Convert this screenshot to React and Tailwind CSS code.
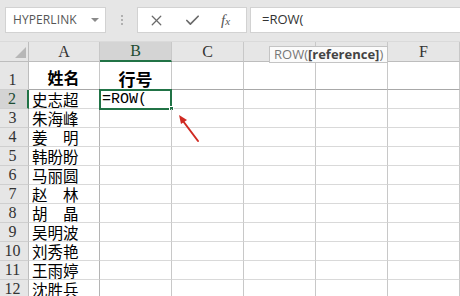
import React from "react";
import { X, Check } from "lucide-react";

const names = ["史志超", "朱海峰", "姜　明", "韩盼盼", "马丽圆", "赵　林", "胡　晶", "吴明波", "刘秀艳", "王雨婷", "沈胜兵"];
const cols = ["A", "B", "C", "D", "E", "F"];

function HeaderCell({ children, selected }) {
  return (
    <div
      className={
        "h-[20px] flex items-center justify-center border-r border-[#c8c8c8] text-[16px] " +
        (selected ? "bg-[#d4d4d4] border-b-2 border-b-[#217346] text-[#1d4d32]" : "bg-[#e6e6e6] border-b border-b-[#bdbdbd] text-[#333]")
      }
      style={{ fontFamily: '"Liberation Serif", serif' }}
    >
      {children}
    </div>
  );
}

function RowHead({ n, h, selected }) {
  return (
    <div
      className={
        "flex items-end justify-center pr-[3px] text-[16px] leading-[18px] border-b border-[#cfcfcf] " +
        h +
        (selected ? " bg-[#d4d4d4] border-r-2 border-r-[#217346] text-[#1d4d32]" : " bg-[#e6e6e6] border-r border-r-[#bdbdbd] text-[#333]")
      }
      style={{ fontFamily: '"Liberation Serif", serif' }}
    >
      {n}
    </div>
  );
}

export default function App() {
  const cjk = { fontFamily: '"Noto Sans CJK SC", sans-serif' };
  return (
    <div className="relative w-[460px] h-[296px] overflow-hidden bg-white" style={{ fontFamily: '"Open Sans", sans-serif' }}>
      {/* formula bar */}
      <div className="h-[42px] bg-[#e6e6e6] flex items-start pt-[7px] border-b border-[#dadada]">
        <div className="ml-[5px] w-[101px] h-[26px] bg-white border border-[#d2d2d2] flex items-center pl-[7px] pr-[6px] justify-between">
          <span className="text-[12px] text-[#555] tracking-[0.1px]">HYPERLINK</span>
          <svg width="8" height="5" viewBox="0 0 8 5"><path d="M0 0 L8 0 L4 4 Z" fill="#8a8a8a" /></svg>
        </div>
        <div className="w-[31px] h-[26px] flex flex-col items-center justify-center gap-[2px]">
          <div className="w-[2px] h-[2px] bg-[#b0b0b0]" />
          <div className="w-[2px] h-[2px] bg-[#b0b0b0]" />
          <div className="w-[2px] h-[2px] bg-[#b0b0b0]" />
        </div>
        <div className="w-[110px] h-[26px] bg-white border border-[#d2d2d2] flex items-center pl-[10px]">
          <X size={17} strokeWidth={1.8} color="#6a6a6a" />
          <div className="w-[19px]" />
          <Check size={17} strokeWidth={2.4} color="#6a6a6a" />
          <div className="w-[20px]" />
          <span className="text-[15px] italic text-[#555]" style={{ fontFamily: '"Liberation Serif", serif' }}>f<span className="text-[11px]">x</span></span>
        </div>
        <div className="ml-[3px] flex-1 h-[26px] bg-white border border-[#d2d2d2] border-r-0 flex items-center pl-[11px]">
          <span className="text-[13px] text-[#333]">=ROW(</span>
        </div>
      </div>

      {/* sheet */}
      <div className="grid grid-cols-[29px_71px_72px_72px_72px_72px_72px]">
        <div className="h-[20px] bg-[#e6e6e6] border-r border-b border-[#bdbdbd] flex items-end justify-end pr-[2px] pb-[3px]">
          <svg width="11" height="11" viewBox="0 0 11 11"><path d="M11 0 L11 11 L0 11 Z" fill="#b7b7b7" /></svg>
        </div>
        {cols.map((c) => (
          <HeaderCell key={c} selected={c === "B"}>{c}</HeaderCell>
        ))}

        {/* row 1 */}
        <RowHead n="1" h="h-[28px]" />
        <div className="h-[28px] border-r border-b border-r-[#c8c8c8] border-b-[#a8a8a8] flex items-end justify-center pb-[2px] pr-[1px] text-[16px] font-bold text-black leading-[20px]" style={cjk}>姓名</div>
        <div className="h-[28px] border-r border-b border-r-[#c8c8c8] border-b-[#a8a8a8] flex items-end justify-center text-[17px] font-bold text-black leading-[20px]" style={cjk}>行号</div>
        {[0, 1, 2, 3].map((i) => (
          <div key={i} className="h-[28px] border-r border-b border-r-[#c8c8c8] border-b-[#a8a8a8]" />
        ))}

        {names.map((nm, idx) => {
          const r = idx + 2;
          return (
            <React.Fragment key={r}>
              <RowHead n={String(r)} h="h-[19px]" selected={r === 2} />
              <div className="h-[19px] border-r border-b border-r-[#b4b4b4] border-b-[#d9d9d9] flex items-center pl-[3px] text-[15.5px] leading-[18px] text-black whitespace-nowrap" style={cjk}>{nm}</div>
              <div className="relative h-[19px] border-r border-b border-r-[#c8c8c8] border-b-[#d9d9d9]">
                {r === 2 && (
                  <>
                    <div className="absolute left-[-1px] top-[-1px] w-[73px] h-[21px] border-2 border-[#217346]" />
                    <div className="absolute left-[2px] top-[0px] text-[15px] leading-[19px] text-black" style={{ fontFamily: '"Liberation Mono", monospace' }}>=ROW(</div>
                    <div className="absolute right-[-3px] bottom-[-3px] w-[5px] h-[5px] bg-[#217346] border border-white" />
                  </>
                )}
              </div>
              {[0, 1, 2, 3].map((i) => (
                <div key={i} className="h-[19px] border-r border-b border-r-[#c8c8c8] border-b-[#d9d9d9]" />
              ))}
            </React.Fragment>
          );
        })}
      </div>

      {/* tooltip */}
      <div className="absolute left-[269px] top-[46px] h-[17px] px-[4px] bg-[#fbfbfb] border border-[#c4c4c4] flex items-center text-[13px] leading-[15px] whitespace-nowrap">
        <span className="text-[#777]">ROW(</span>
        <span className="font-bold text-[#444]">[reference]</span>
        <span className="text-[#777]">)</span>
      </div>

      {/* red arrow */}
      <svg className="absolute left-0 top-0" width="460" height="296" viewBox="0 0 460 296">
        <line x1="198" y1="141" x2="183" y2="121" stroke="#d02a22" strokeWidth="2" strokeLinecap="round" />
        <path d="M179 115 L187 120 L181 124 Z" fill="#d02a22" />
      </svg>
    </div>
  );
}
